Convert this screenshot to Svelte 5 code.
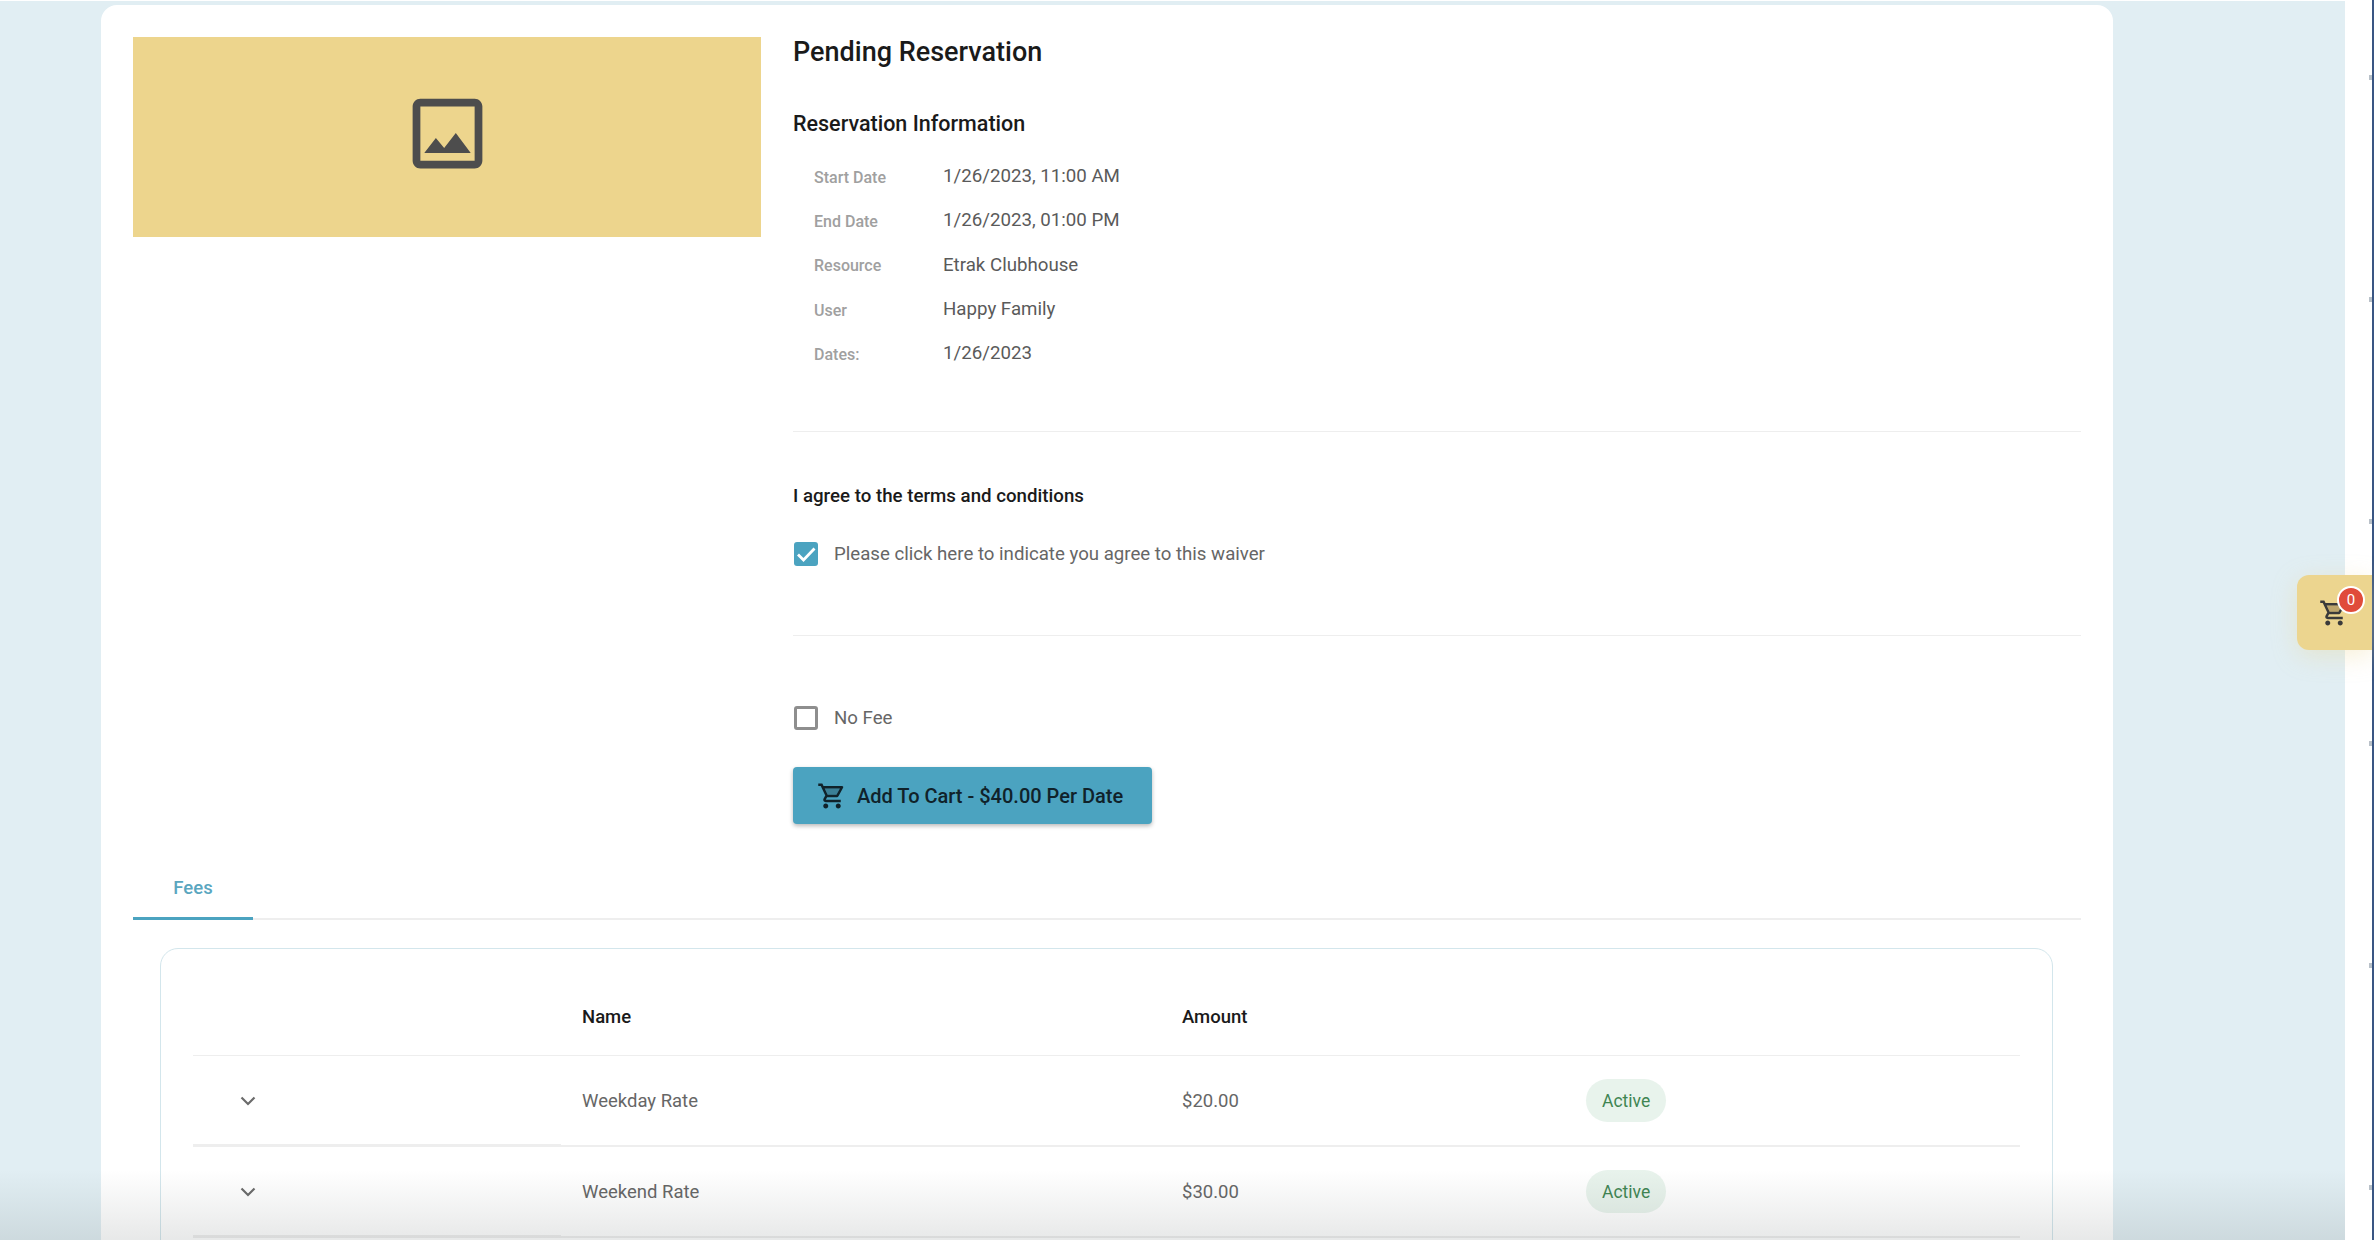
<script>
  const info = [
    { label: 'Start Date', value: '1/26/2023, 11:00 AM' },
    { label: 'End Date', value: '1/26/2023, 01:00 PM' },
    { label: 'Resource', value: 'Etrak Clubhouse' },
    { label: 'User', value: 'Happy Family' },
    { label: 'Dates:', value: '1/26/2023' }
  ];
  const fees = [
    { name: 'Weekday Rate', amount: '$20.00', status: 'Active' },
    { name: 'Weekend Rate', amount: '$30.00', status: 'Active' }
  ];
  const cartPath = 'M15.55 13c.75 0 1.41-.41 1.75-1.03l3.58-6.49A.996.996 0 0 0 20.01 4H5.21l-.94-2H1v2h2l3.6 7.59-1.35 2.44C4.52 15.37 5.48 17 7 17h12v-2H7l1.1-2h7.45zM6.16 6h12.15l-2.76 5H8.53L6.16 6zM7 18c-1.1 0-1.99.9-1.99 2S5.900 22 7 22s2-.9 2-2-.9-2-2-2zm10 0c-1.1 0-1.99.9-1.99 2s.89 2 1.990 2 2-.9 2-2-.9-2-2-2z';
</script>

<div class="page">
  <main class="backdrop">
    <div class="card">
      <div class="top">
        <div class="thumb">
          <svg viewBox="0 0 24 24" width="93" height="93" fill="#4d4d4d">
            <path d="M19 5v14H5V5h14m0-2H5c-1.1 0-2 .9-2 2v14c0 1.1.9 2 2 2h14c1.100 0 2-.9 2-2V5c0-1.100-.9-2-2-2zm-4.860 8.860l-3 3.870L9 13.140 6 17h12l-3.860-5.140z" />
          </svg>
        </div>
        <div class="details">
          <h1>Pending Reservation</h1>
          <h2>Reservation Information</h2>
          <dl class="info">
            {#each info as row}
              <div class="info-row">
                <dt>{row.label}</dt>
                <dd>{row.value}</dd>
              </div>
            {/each}
          </dl>
          <hr class="rule first" />
          <h3>I agree to the terms and conditions</h3>
          <div class="check">
            <span class="box on">
              <svg viewBox="0 0 24 24" width="24" height="24"><path d="M4 12.500l5.500 5.500L20.500 6.500" fill="none" stroke="#fff" stroke-width="2.800" /></svg>
            </span>
            <span>Please click here to indicate you agree to this waiver</span>
          </div>
          <hr class="rule second" />
          <div class="check nofee">
            <span class="box"></span>
            <span>No Fee</span>
          </div>
          <button class="add">
            <svg viewBox="0 0 24 24" width="30" height="30">
              <path d="M6.160 6h12.150l-2.760 5H8.530z" fill="#3b7f96" />
              <path d={cartPath} fill="#10222a" />
            </svg>
            <span>Add To Cart - $40.00 Per Date</span>
          </button>
        </div>
      </div>

      <div class="tabs">
        <div class="tab">Fees</div>
      </div>

      <div class="table-card">
        <div class="table">
          <div class="thead">
            <div></div>
            <div>Name</div>
            <div>Amount</div>
            <div></div>
          </div>
          {#each fees as fee}
            <div class="tr">
              <div class="chev">
                <svg viewBox="0 0 16 10" width="16" height="10"><path d="M1.500 1.500L8 8l6.500-6.500" fill="none" stroke="#6b6b6b" stroke-width="2.200" /></svg>
              </div>
              <div>{fee.name}</div>
              <div>{fee.amount}</div>
              <div><span class="badge">{fee.status}</span></div>
            </div>
          {/each}
        </div>
      </div>
    </div>
  </main>
  <div class="gutter"></div>

  <div class="float-cart">
    <svg viewBox="0 0 24 24" width="30" height="30">
      <path d="M6.160 6h12.150l-2.760 5H8.530z" fill="#bda56c" />
      <path d={cartPath} fill="#3a3a3a" />
    </svg>
    <span class="count">0</span>
  </div>
  <div class="fade"></div>
</div>

<style>
  :global(body) { margin: 0; background: #fff; }
  .page { position: relative; display: flex; width: 2374px; height: 1240px; overflow: hidden; font-family: Roboto, "Liberation Sans", sans-serif; color: #555; }
  .backdrop { box-sizing: border-box; width: 2345px; height: 1239px; margin-top: 1px; padding: 4px 232px 0 101px; background: #e1eef3; }
  .gutter { flex: 1; border-right: 2px solid #3a5683; background: repeating-linear-gradient(to bottom, transparent 0 75px, #b9c1c9 75px 80px, transparent 80px 222px) right / 3px 100% no-repeat; }
  .card { box-sizing: border-box; height: 1300px; padding: 32px 32px 0; background: #fff; border-radius: 16px 16px 0 0; }
  .top { display: flex; gap: 32px; }
  .thumb { box-sizing: border-box; display: flex; align-items: center; justify-content: center; flex: none; width: 628px; height: 200px; padding-bottom: 7px; background: #edd58d; }
  .details { flex: 1; }
  h1 { margin: 0; font-size: 27px; line-height: 30px; font-weight: 500; color: #1a1a1a; }
  h2 { margin: 42px 0 0; font-size: 21.500px; line-height: 30px; font-weight: 500; color: #1a1a1a; }
  h3 { margin: 52px 0 0; font-size: 18.700px; line-height: 24px; font-weight: 500; color: #1a1a1a; }
  .info { margin: 15px 0 0; padding-left: 21px; }
  .info-row { display: flex; align-items: center; height: 44.300px; }
  dt { width: 129px; padding-top: 2px; font-size: 16px; font-weight: 500; color: #a0a0a0; }
  dd { margin: 0; font-size: 18.700px; color: #5a5a5a; }
  .rule { margin: 0; border: 0; border-top: 1px solid #eeeeee; }
  .rule.first { margin-top: 56px; }
  .rule.second { margin-top: 69px; }
  .check { display: flex; align-items: center; gap: 16px; margin-top: 34px; padding-left: 1px; font-size: 18.650px; color: #666; }
  .nofee { margin-top: 70px; }
  .box { box-sizing: border-box; display: flex; align-items: center; justify-content: center; width: 24px; height: 24px; border: 3px solid #8e8e8e; border-radius: 3px; }
  .box.on { background: #4ba3c0; border: 0; }
  .add { display: flex; align-items: center; gap: 10px; width: 359px; height: 57px; margin-top: 37px; padding: 0 0 0 24px; border: 0; border-radius: 4px; background: #4ba3c0; box-shadow: 0 2px 4px rgba(0,0,0,.28); font: 500 20px Roboto, sans-serif; color: #10222a; }
  .tabs { margin-top: 31px; border-bottom: 2px solid #eeeeee; }
  .tab { box-sizing: border-box; width: 120px; height: 65px; margin-bottom: -2px; padding-top: 22px; border-bottom: 3px solid #4ba3c0; text-align: center; font-size: 18.500px; font-weight: 500; color: #5aa6bf; }
  .table-card { margin: 28px 28px 0 27px; height: 400px; padding: 0 32px; border: 1px solid #d3e6ec; border-radius: 18px 18px 0 0; }
  .thead, .tr { display: grid; grid-template-columns: 389px 600px 404px 1fr; align-items: center; }
  .thead { height: 107px; padding-top: 30px; box-sizing: border-box; border-bottom: 1px solid #eeeeee; font-size: 18.500px; font-weight: 500; color: #1a1a1a; }
  .tr { height: 89px; border-bottom: 2px solid #eeeeee; font-size: 18.500px; color: #666; }
  .chev { align-self: stretch; display: flex; align-items: center; margin-right: 21px; padding-left: 47px; box-shadow: inset 0 -1px 0 #eeeeee; }
  .badge { display: inline-flex; align-items: center; height: 43px; padding: 0 16px; border-radius: 22px; background: #e8f3ec; font-size: 17.500px; color: #3f8552; }
  .float-cart { position: absolute; left: 2297px; top: 575px; display: flex; align-items: center; width: 75px; height: 75px; padding-left: 22px; box-sizing: border-box; background: #ecd58f; border-radius: 12px 0 0 12px; box-shadow: 0 6px 24px rgba(236,213,143,.35); }
  .count { position: absolute; left: 40px; top: 11px; box-sizing: border-box; display: flex; align-items: center; justify-content: center; width: 28px; height: 28px; border: 2px solid #fff; border-radius: 50%; background: #e04b3a; font-size: 15px; color: #fff; }
  .fade { position: absolute; left: 0; right: 29px; bottom: 0; height: 70px; background: linear-gradient(to bottom, rgba(60,70,70,0), rgba(60,70,70,.12)); pointer-events: none; }
</style>
